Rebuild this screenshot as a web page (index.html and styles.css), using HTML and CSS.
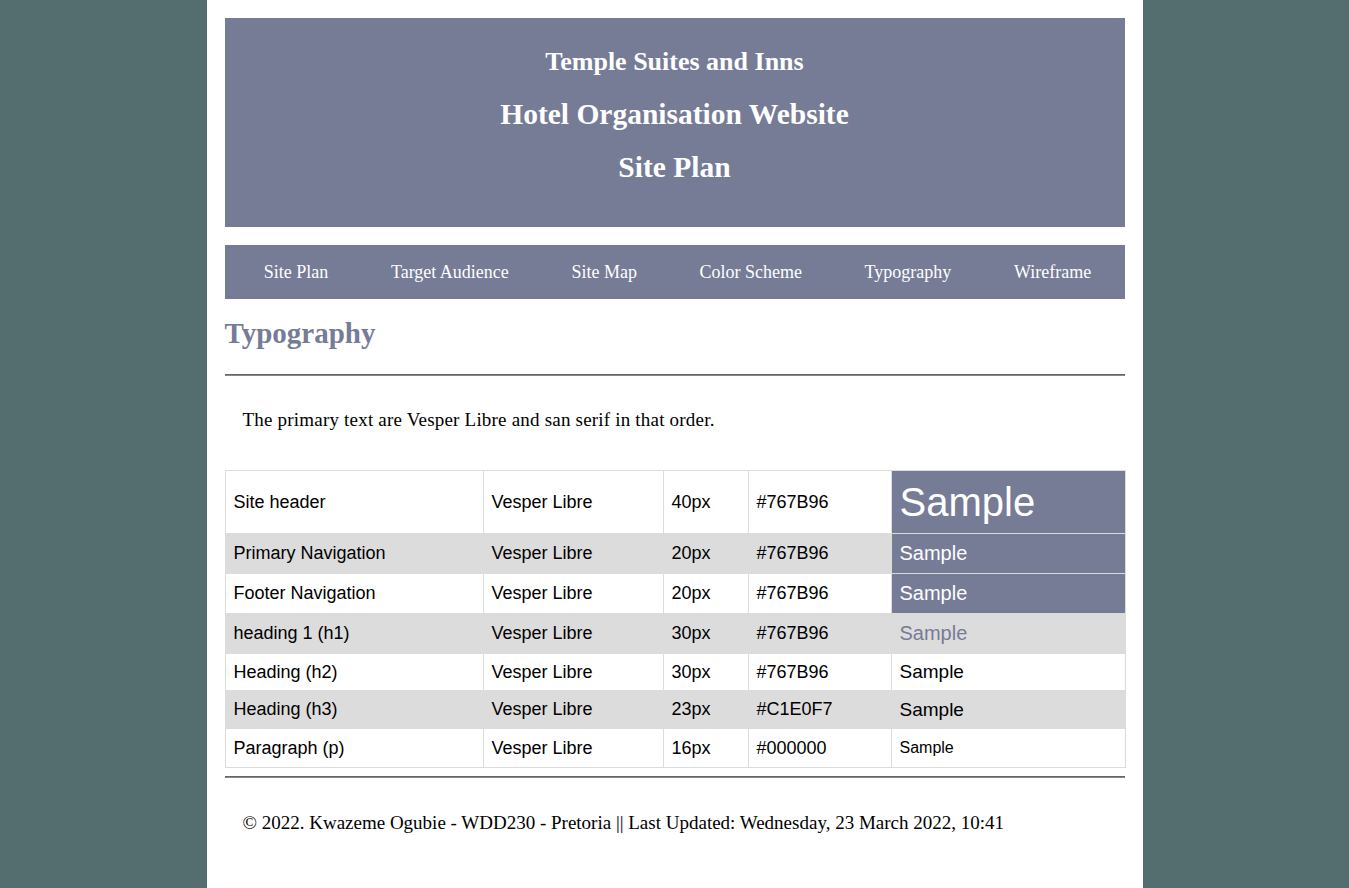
FILE: index.html
```html
<!DOCTYPE html>
<html lang="en">
<head>
<meta charset="utf-8">
<title>Typography - Temple Suites and Inns</title>
<link rel="stylesheet" href="styles.css">
</head>
<body>
<div class="page">
  <header class="site-header">
    <h2 class="hl hl-sm">Temple Suites and Inns</h2>
    <h2 class="hl">Hotel Organisation Website</h2>
    <h2 class="hl">Site Plan</h2>
  </header>
  <nav class="nav">
    <a href="#">Site Plan</a>
    <a href="#">Target Audience</a>
    <a href="#">Site Map</a>
    <a href="#">Color Scheme</a>
    <a href="#">Typography</a>
    <a href="#">Wireframe</a>
  </nav>
  <main>
    <h1 class="title">Typography</h1>
    <hr class="rule">
    <p class="intro">The primary text are Vesper Libre and san serif in that order.</p>
    <table class="typo">
      <colgroup>
        <col class="c1"><col class="c2"><col class="c3"><col class="c4"><col class="c5">
      </colgroup>
      <tr class="r1"><td>Site header</td><td>Vesper Libre</td><td>40px</td><td>#767B96</td><td class="s-filled s-40">Sample</td></tr>
      <tr class="r2 alt"><td>Primary Navigation</td><td>Vesper Libre</td><td>20px</td><td>#767B96</td><td class="s-filled s-20">Sample</td></tr>
      <tr class="r2"><td>Footer Navigation</td><td>Vesper Libre</td><td>20px</td><td>#767B96</td><td class="s-filled s-20">Sample</td></tr>
      <tr class="r2 alt"><td>heading 1 (h1)</td><td>Vesper Libre</td><td>30px</td><td>#767B96</td><td class="s-accent s-20">Sample</td></tr>
      <tr class="r3"><td>Heading (h2)</td><td>Vesper Libre</td><td>30px</td><td>#767B96</td><td class="s-19">Sample</td></tr>
      <tr class="r4 alt"><td>Heading (h3)</td><td>Vesper Libre</td><td>23px</td><td>#C1E0F7</td><td class="s-19">Sample</td></tr>
      <tr class="r5"><td>Paragraph (p)</td><td>Vesper Libre</td><td>16px</td><td>#000000</td><td class="s-16">Sample</td></tr>
    </table>
    <hr class="rule rule-bottom">
  </main>
  <footer class="footer">
    <p>© 2022. Kwazeme Ogubie - WDD230 - Pretoria || Last Updated: Wednesday, 23 March 2022, 10:41</p>
  </footer>
</div>
</body>
</html>
```
FILE: styles.css
```css
* { box-sizing: border-box; }

html, body {
  margin: 0;
  padding: 0;
}

body {
  background: #546e70;
  font-family: "Liberation Serif", "Times New Roman", serif;
  color: #000;
}

.page {
  width: 936px;
  min-height: 888px;
  margin: 0 auto;
  background: #fff;
  padding: 18px 18px 20px;
}

.site-header {
  background: #767b96;
  height: 209px;
  padding-top: 17px;
  display: flex;
  flex-direction: column;
  align-items: center;
}

.hl {
  margin: 0;
  color: #fff;
  font-size: 29.5px;
  font-weight: bold;
  line-height: 53px;
}

.hl-sm {
  font-size: 26px;
}

.nav {
  margin-top: 18px;
  height: 54px;
  background: #767b96;
  display: flex;
  justify-content: space-around;
  align-items: center;
  padding: 0 2px 0 8px;
}

.nav a {
  color: #fff;
  text-decoration: none;
  font-size: 18px;
}

.title {
  margin: 17px 0 0;
  font-size: 29px;
  line-height: 34px;
  color: #767b96;
  font-weight: bold;
}

.rule {
  margin: 24px 0 0;
  border: 0;
  border-top: 1px solid #666;
  border-bottom: 1px solid #888;
  height: 2px;
}

.intro {
  margin: 34px 0 0;
  padding-left: 18px;
  font-size: 19px;
  letter-spacing: 0.2px;
  line-height: 20px;
}

.typo {
  margin-top: 40px;
  width: 900px;
  border-collapse: collapse;
  table-layout: fixed;
  font-family: "Liberation Sans", Arial, sans-serif;
  font-size: 18px;
}

.c1 { width: 258px; }
.c2 { width: 180px; }
.c3 { width: 85px; }
.c4 { width: 143px; }
.c5 { width: 234px; }

.typo td {
  border: 1px solid #dcdcdc;
  padding: 0 8px;
  vertical-align: middle;
}

.typo .r1 { height: 63px; }
.typo .r2 { height: 40px; }
.typo .r3 { height: 37px; }
.typo .r4 { height: 38px; }
.typo .r5 { height: 39px; }

.typo .alt { background: #dcdcdc; }

.typo .s-filled {
  background: #767b96;
  color: #fff;
}

.typo .s-accent { color: #767b96; }
.typo .s-40 { font-size: 40px; line-height: 46px; }
.typo .s-20 { font-size: 20px; }
.typo .s-19 { font-size: 19px; }
.typo .s-16 { font-size: 16px; }

.rule-bottom {
  margin-top: 8px;
}

.footer p {
  margin: 34px 0 0;
  padding-left: 18px;
  font-size: 19px;
  line-height: 22px;
}
```
